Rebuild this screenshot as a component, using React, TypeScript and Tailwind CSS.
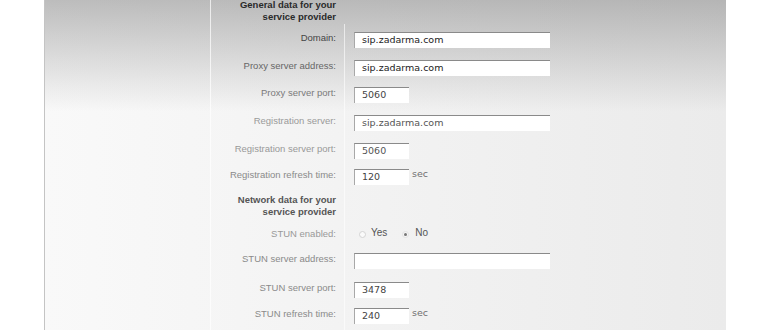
const labelFont = { fontFamily: '"Liberation Sans", Arial, sans-serif' }
const inputFont = { fontFamily: '"DejaVu Sans", Verdana, sans-serif' }

type Row = {
  label: string
  labelColor: string
  value?: string
  valueColor?: string
  wide?: boolean
  sec?: boolean
  radio?: boolean
  h: string
}

const general: Row[] = [
  { label: "Domain:", labelColor: "text-[#454545]", value: "sip.zadarma.com", valueColor: "text-[#1c1c1c]", wide: true, h: "h-[28px]" },
  { label: "Proxy server address:", labelColor: "text-[#666]", value: "sip.zadarma.com", valueColor: "text-[#222]", wide: true, h: "h-[27px]" },
  { label: "Proxy server port:", labelColor: "text-[#7a7a7a]", value: "5060", valueColor: "text-[#444]", h: "h-[28px]" },
  { label: "Registration server:", labelColor: "text-[#9a9a9a]", value: "sip.zadarma.com", valueColor: "text-[#555]", wide: true, h: "h-[28px]" },
  { label: "Registration server port:", labelColor: "text-[#999]", value: "5060", valueColor: "text-[#555]", h: "h-[26px]" },
  { label: "Registration refresh time:", labelColor: "text-[#8a8a8a]", value: "120", valueColor: "text-[#444]", sec: true, h: "h-[27.5px]" },
]

const network: Row[] = [
  { label: "STUN enabled:", labelColor: "text-[#999]", radio: true, h: "h-[25px]" },
  { label: "STUN server address:", labelColor: "text-[#8a8a8a]", value: "", wide: true, h: "h-[29px]" },
  { label: "STUN server port:", labelColor: "text-[#8a8a8a]", value: "3478", valueColor: "text-[#444]", h: "h-[26px]" },
  { label: "STUN refresh time:", labelColor: "text-[#8a8a8a]", value: "240", valueColor: "text-[#444]", sec: true, h: "h-[24px]" },
]

function Field({ row }: { row: Row }) {
  if (row.radio) {
    return (
      <div className="flex items-start gap-[3px] pl-[5px] text-[10px] leading-[11px] text-[#555]" style={labelFont}>
        <span className="mt-[3px] h-[7px] w-[7px] rounded-full border border-[#d4d4d4] bg-[#fafafa]" />
        <span className="mt-[-1px] ml-[2px] mr-[12px]">Yes</span>
        <span className="mt-[3px] flex h-[7px] w-[7px] items-center justify-center rounded-full border border-[#e2e2e2] bg-[#f6f6f6]">
          <span className="h-[3px] w-[3px] rounded-full bg-[#777]" />
        </span>
        <span className="mt-[-1px] ml-[3px]">No</span>
      </div>
    )
  }
  return (
    <div className="flex items-start">
      <div
        className={`mt-[0.5px] flex h-[16px] items-center border-t border-l border-t-[#8a8a8a] border-l-[#a8a8a8] bg-white pl-[7px] text-[9.5px] ${row.valueColor ?? ""} ${row.wide ? "w-[196px]" : "w-[55px]"}`}
        style={inputFont}
      >
        {row.value}
      </div>
      {row.sec && (
        <span className="ml-[3px] mt-[-1px] text-[9.5px] leading-[11px] text-[#707070]" style={inputFont}>
          sec
        </span>
      )}
    </div>
  )
}

function FormRow({ row }: { row: Row }) {
  return (
    <div className={`flex shrink-0 ${row.h}`}>
      <div className={`w-[134px] pr-[9px] text-right text-[9.5px] leading-[11px] ${row.labelColor}`} style={labelFont}>
        {row.label}
      </div>
      <div className="pl-[9px]">
        <Field row={row} />
      </div>
    </div>
  )
}

function Heading({ text, color, h, mt }: { text: string[]; color: string; h: string; mt: string }) {
  return (
    <div className={`flex shrink-0 ${h}`}>
      <div className={`w-[134px] pr-[9px] text-right text-[9.5px] font-bold leading-[11.5px] ${color} ${mt}`} style={labelFont}>
        {text.map((t) => (
          <div key={t}>{t}</div>
        ))}
      </div>
    </div>
  )
}

export default function App() {
  return (
    <div className="flex h-[330px] w-[770px] overflow-hidden bg-white">
      <div className="ml-[44px] flex h-full w-[682px] border-l border-[#c4c4c4] bg-[linear-gradient(to_bottom,rgba(115,115,115,0.45),rgba(115,115,115,0)_112px),linear-gradient(to_right,#f9f9f9,#ebebeb)]">
        <div className="w-[166px] border-r border-white/70" />
        <div className="relative flex flex-col overflow-hidden">
          <div className="absolute top-[24px] bottom-0 left-[133px] w-px bg-white/60" />
          <Heading text={["General data for your", "service provider"]} color="text-[#2a2a2a]" h="h-[31.5px]" mt="-mt-[1px]" />
          {general.map((r) => (
            <FormRow key={r.label} row={r} />
          ))}
          <Heading text={["Network data for your", "service provider"]} color="text-[#555]" h="h-[31.5px]" mt="-mt-[2px]" />
          {network.map((r) => (
            <FormRow key={r.label} row={r} />
          ))}
        </div>
      </div>
    </div>
  )
}
